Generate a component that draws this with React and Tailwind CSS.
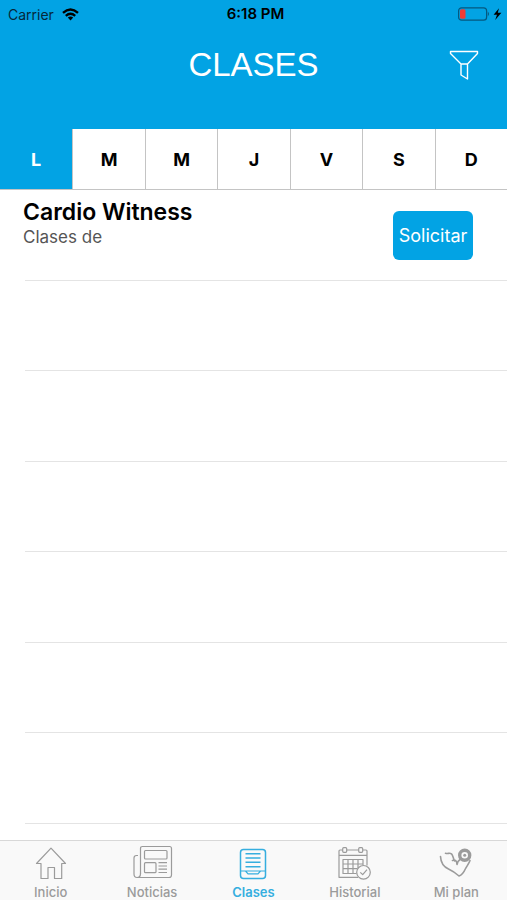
import { useState } from 'react';

const DAYS = [
  { id: 'lunes', label: 'L' },
  { id: 'martes', label: 'M' },
  { id: 'miercoles', label: 'M' },
  { id: 'jueves', label: 'J' },
  { id: 'viernes', label: 'V' },
  { id: 'sabado', label: 'S' },
  { id: 'domingo', label: 'D' },
];

const CLASSES = [{ id: 1, name: 'Cardio Witness', detail: 'Clases de' }];

// The list always shows at least this many separators
const MIN_ROWS = 7;

function TabIcon({ children }) {
  return (
    <svg
      viewBox="0 0 44 36"
      className="h-9 w-11"
      fill="none"
      stroke="currentColor"
      strokeWidth="1.2"
      strokeLinejoin="round"
      aria-hidden="true"
    >
      {children}
    </svg>
  );
}

function HomeIcon() {
  return (
    <TabIcon>
      <path d="M12 19.5H7.5L22 4.2L36.5 19.5H32.7V34.5H25.5V23.5H19V34.5H12Z" />
    </TabIcon>
  );
}

function NewsIcon() {
  return (
    <TabIcon>
      <path d="M10.5 30V4.5Q10.5 2.5 12.5 2.5H39.5Q41.5 2.5 41.5 4.5V31Q41.5 33.5 39 33.5H7Q4 33.5 4 30V14Q4 11.5 6.5 11.5H8" />
      <path d="M10.5 29.5Q10.5 33.5 7 33.5" />
      <rect x="14.5" y="6.5" width="22.5" height="8.5" rx="1" />
      <rect x="14.5" y="18.7" width="11.5" height="10" rx="1" />
      <path d="M28.5 18.7H37M28.5 22H37M28.5 25.2H37M28.5 28.5H37" />
    </TabIcon>
  );
}

function ClassesIcon() {
  return (
    <TabIcon>
      <rect x="9.5" y="5.5" width="25" height="29" rx="3" strokeWidth="1.5" />
      <path d="M14.5 9.7H29.5M14.5 14H29.5M14.5 18.3H29.5M14.5 22.7H29.5" strokeWidth="1.4" />
      <path d="M9.5 27H14.5L17 29.8H27L29.5 27H34.5M14.5 27H29.5" />
    </TabIcon>
  );
}

function HistoryIcon() {
  return (
    <TabIcon>
      <path d="M9.7 6H7Q6 6 6 7V33.3H25M13.7 6H25.7M29.7 6H33Q34 6 34 7V21.5M6 11.3H34" />
      <rect x="9.7" y="3.7" width="4" height="4.6" rx="1" />
      <rect x="25.7" y="3.7" width="4" height="4.6" rx="1" />
      <path d="M23.5 29.5H10V15.5H30V21M10 20H30M10 24.7H24.5M15 15.5V29.5M20 15.5V29.5M25 15.5V24" />
      <circle cx="30.5" cy="28.3" r="6.8" />
      <path d="M27.3 28.3L29.7 30.7L34 25.7" />
    </TabIcon>
  );
}

function PlanIcon() {
  return (
    <TabIcon>
      <g strokeWidth="1.6" strokeLinecap="round">
        <path d="M6.5 12.5C6.8 18.5 10 23 14.5 25C18.5 26.8 21.5 29 25 32C28 31 30 28 31.3 25C32.8 22 35 19.5 36 16.5" />
        <path d="M11.5 9.2C14 10 15.5 8.5 17.5 9.8C19 11.2 19 14 20.5 17M18.5 16.5C21 15 23 17 23 20.5C23.4 18 24.5 16.5 26 15.5" />
      </g>
      <circle cx="30.7" cy="11.3" r="5" strokeWidth="3.4" />
      <circle cx="30.7" cy="11.3" r="1.5" fill="currentColor" stroke="none" />
    </TabIcon>
  );
}

const TABS = [
  { id: 'inicio', label: 'Inicio', Icon: HomeIcon },
  { id: 'noticias', label: 'Noticias', Icon: NewsIcon },
  { id: 'clases', label: 'Clases', Icon: ClassesIcon },
  { id: 'historial', label: 'Historial', Icon: HistoryIcon },
  { id: 'plan', label: 'Mi plan', Icon: PlanIcon },
];

function StatusBar() {
  return (
    <div className="grid h-7 grid-cols-[1fr_auto_1fr] items-center pr-1 pl-2 text-[14px] text-[#06283a]">
      <div className="flex items-center gap-2">
        <span>Carrier</span>
        <svg viewBox="0 0 17 13" className="h-[13px] w-[17px] text-black" fill="none" stroke="currentColor" strokeWidth="2.4">
          <path d="M1 4.8Q8.5 -1.8 16 4.8" />
          <path d="M3.8 7.8Q8.5 3.8 13.2 7.8" />
          <path d="M8.5 12.5L5.8 9.6Q8.5 7.5 11.2 9.6Z" fill="currentColor" stroke="none" />
        </svg>
      </div>
      <span className="text-[15px] font-semibold text-black">6:18 PM</span>
      <div className="flex items-center justify-end">
        <svg viewBox="0 0 46 14" className="h-[14px] w-[46px]" aria-hidden="true">
          <rect x="1.6" y="0.8" width="28" height="12.4" rx="3" fill="none" stroke="#05587f" strokeWidth="1.2" />
          <rect x="3" y="2.2" width="5.5" height="9.6" rx="1.5" fill="#f03b35" />
          <path d="M30.8 4.6Q33.2 7 30.8 9.4Z" fill="#05587f" />
          <path d="M42 1.2L36.6 7.8H40L38.2 13L44.4 5.8H40.8Z" fill="#000" />
        </svg>
      </div>
    </div>
  );
}

function ClassRow({ item }) {
  return (
    <div className="flex items-start justify-between pr-[34px] pl-[23px]">
      <div className="pt-2">
        <h2 className="text-[23px] leading-7 font-semibold text-black">{item.name}</h2>
        <p className="text-[17px] leading-[22px] text-[#555]">{item.detail}</p>
      </div>
      <button
        type="button"
        className="mt-[21px] h-[49px] w-20 rounded-md bg-[#02a3e4] pt-px text-lg text-white"
      >
        Solicitar
      </button>
    </div>
  );
}

export default function App() {
  const [day, setDay] = useState('lunes');
  const [tab, setTab] = useState('clases');

  const rows = Array.from({ length: Math.max(MIN_ROWS, CLASSES.length) }, (_, i) => CLASSES[i]);

  return (
    <div className="flex h-screen flex-col bg-white font-['Inter','Liberation_Sans',sans-serif]">
      <header className="bg-[#02a3e4]">
        <StatusBar />
        <div className="grid h-[101px] grid-cols-[1fr_auto_1fr] items-start px-7 pt-[17px]">
          <h1 className="col-start-2 font-['Liberation_Sans',sans-serif] text-[33px] leading-10 text-white">
            CLASES
          </h1>
          <button type="button" aria-label="Filtrar" className="mt-[5px] justify-self-end text-white">
            <svg viewBox="0 0 30 30" className="size-[30px]" fill="none" stroke="currentColor" strokeWidth="1.4" strokeLinejoin="round">
              <path d="M1.5 1.5H28.5V3.5L18.5 14V29L12 25V14L1.5 3.5ZM12 14H18.5" />
            </svg>
          </button>
        </div>
      </header>

      <div className="grid h-[61px] shrink-0 grid-cols-7 border-b border-[#c4c4c4]">
        {DAYS.map(({ id, label }) => (
          <button
            key={id}
            type="button"
            aria-label={id}
            aria-pressed={day === id}
            onClick={() => setDay(id)}
            className={`border-l border-[#c4c4c4] pt-0.5 text-lg font-bold first:border-l-0 ${
              day === id ? 'bg-[#02a3e4] text-white' : 'text-black'
            }`}
          >
            {label}
          </button>
        ))}
      </div>

      <main className="min-h-0 flex-1 overflow-y-auto">
        <ul>
          {rows.map((item, i) => (
            <li key={i} className="flex flex-col odd:h-[91px] even:h-[90px]">
              <div className="flex-1">{item && <ClassRow item={item} />}</div>
              <div className="ml-[25px] h-px bg-[#e4e4e4]" />
            </li>
          ))}
        </ul>
      </main>

      <nav className="grid h-[60px] shrink-0 grid-cols-5 border-t border-[#d8d8d8] bg-[#f9f9f9]">
        {TABS.map(({ id, label, Icon }) => (
          <button
            key={id}
            type="button"
            onClick={() => setTab(id)}
            className={`flex flex-col items-center gap-1 pt-[3px] text-[13px] leading-4 ${
              tab === id ? 'font-semibold text-[#35aedf]' : 'font-medium text-[#9b9b9b]'
            }`}
          >
            <Icon />
            <span>{label}</span>
          </button>
        ))}
      </nav>
    </div>
  );
}
